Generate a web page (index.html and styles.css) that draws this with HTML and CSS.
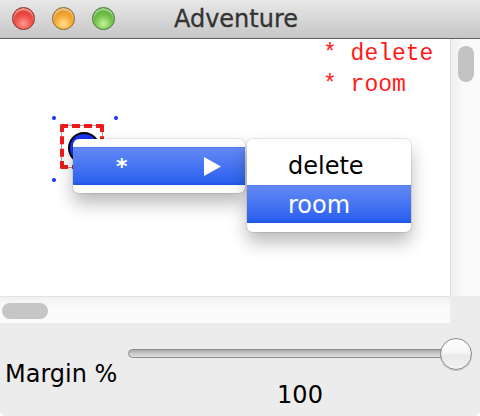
FILE: index.html
```html
<!DOCTYPE html>
<html>
<head>
<meta charset="utf-8">
<link rel="stylesheet" href="styles.css">
</head>
<body>
<div class="window">
  <div class="titlebar">
    <div class="lights">
      <span class="light red"></span>
      <span class="light orange"></span>
      <span class="light green"></span>
    </div>
    <div class="title">Adventure</div>
  </div>
  <div class="content">
    <div class="canvas">
      <div class="log">
        <div>* delete</div>
        <div>* room</div>
      </div>
      <span class="handle h1"></span>
      <span class="handle h2"></span>
      <span class="handle h3"></span>
      <span class="handle h4"></span>
      <div class="sel-gray"></div>
      <div class="sel-red"></div>
      <div class="node"></div>
    </div>
    <div class="vscroll"><div class="vthumb"></div></div>
    <div class="hscroll"><div class="hthumb"></div></div>
    <div class="corner"></div>
  </div>
  <div class="panel">
    <div class="label">Margin %</div>
    <div class="slider-col">
      <div class="slider">
        <div class="track"></div>
        <div class="knob"></div>
      </div>
      <div class="value">100</div>
    </div>
  </div>

  <div class="menu menu1">
    <div class="item hl">
      <span class="star">*</span>
      <svg class="arrow" width="17" height="19" viewBox="0 0 17 19"><polygon points="0,0 17,9.5 0,19" fill="#fff"/></svg>
    </div>
  </div>
  <div class="menu menu2">
    <div class="item">delete</div>
    <div class="item hl">room</div>
  </div>
</div>
</body>
</html>
```

FILE: styles.css
```css
html, body {
  margin: 0;
  padding: 0;
  background: #ffffff;
}

.window {
  position: relative;
  width: 480px;
  height: 416px;
  overflow: hidden;
  border-radius: 0 0 6px 6px;
  background: #ececec;
  font-family: "DejaVu Sans", sans-serif;
}

.titlebar {
  position: relative;
  height: 38px;
  border-bottom: 1px solid #5e5e5e;
  background: linear-gradient(#e8e8e8, #d3d3d3 60%, #c6c6c6);
  display: flex;
  align-items: center;
}

.lights {
  display: flex;
  gap: 17px;
  padding-left: 12px;
  margin-top: -2px;
}

.light {
  width: 23px;
  height: 23px;
  border-radius: 50%;
  box-sizing: border-box;
}

.red {
  background: radial-gradient(circle at 50% 75%, #ff9a8e 0%, #ee4d45 45%, #c8231c 100%);
  border: 1px solid #8e2a26;
  box-shadow: inset 0 2px 2px rgba(255,255,255,0.6);
}

.orange {
  background: radial-gradient(circle at 50% 75%, #ffe08a 0%, #f3a935 45%, #cc7a10 100%);
  border: 1px solid #8e6523;
  box-shadow: inset 0 2px 2px rgba(255,255,255,0.6);
}

.green {
  background: radial-gradient(circle at 50% 75%, #c4f59a 0%, #71c34a 45%, #3d9224 100%);
  border: 1px solid #3f7a2c;
  box-shadow: inset 0 2px 2px rgba(255,255,255,0.6);
}

.title {
  position: absolute;
  left: 0;
  right: 8px;
  top: 0;
  text-align: center;
  line-height: 38px;
  font-size: 24px;
  color: #333333;
  -webkit-text-stroke: 0.3px #333333;
}

.content {
  display: grid;
  grid-template-columns: 450px 30px;
  grid-template-rows: 257px 27px;
}

.canvas {
  position: relative;
  background: #ffffff;
}

.log {
  position: absolute;
  left: 323px;
  top: 0;
  font-family: "Liberation Mono", monospace;
  font-size: 23px;
  line-height: 31px;
  color: #ff1a1a;
  white-space: nowrap;
}

.handle {
  position: absolute;
  width: 4px;
  height: 4px;
  border-radius: 50%;
  background: #1530ff;
}
.h1 { left: 52px; top: 77px; }
.h2 { left: 114px; top: 77px; }
.h3 { left: 52px; top: 139px; }
.h4 { left: 114px; top: 139px; }

.sel-gray {
  position: absolute;
  left: 61px;
  top: 86px;
  width: 40px;
  height: 41px;
  border: 1px solid #a0a0a0;
}

.sel-red {
  position: absolute;
  left: 60px;
  top: 85px;
  width: 36px;
  height: 37px;
  border: 4px dashed #f01a1a;
  border-radius: 2px;
}

.node {
  position: absolute;
  left: 68px;
  top: 93px;
  width: 28px;
  height: 28px;
  border-radius: 50%;
  background: #1834f4;
  border: 2px solid #000;
}

.vscroll {
  position: relative;
  border-left: 1px solid #dedede;
  background: linear-gradient(90deg, #efefef, #f9f9f9 40%, #fbfbfb);
}

.vthumb {
  position: absolute;
  left: 7px;
  top: 7px;
  width: 16px;
  height: 36px;
  border-radius: 8px;
  background: #c3c3c3;
}

.hscroll {
  position: relative;
  border-top: 1px solid #e2e2e2;
  background: linear-gradient(#f1f1f1, #fafafa 40%, #fbfbfb);
}

.hthumb {
  position: absolute;
  left: 2px;
  top: 6px;
  width: 46px;
  height: 16px;
  border-radius: 8px;
  background: #c6c6c6;
}

.corner {
  background: #ececec;
}

.panel {
  display: flex;
  align-items: flex-start;
  padding-left: 5px;
  height: 93px;
}

.label {
  margin-top: 37px;
  width: 112px;
  margin-right: 11px;
  font-size: 24px;
  line-height: 28px;
  color: #000;
  white-space: nowrap;
}

.slider-col {
  width: 344px;
  margin-top: 15px;
  display: flex;
  flex-direction: column;
  align-items: center;
}

.slider {
  position: relative;
  width: 344px;
  height: 33px;
}

.track {
  position: absolute;
  left: 0;
  right: 14px;
  top: 11px;
  height: 9px;
  box-sizing: border-box;
  border: 1px solid #8c8c8c;
  border-radius: 5px;
  background: linear-gradient(#a9a9a9, #cfcfcf 60%, #dedede);
}

.knob {
  position: absolute;
  right: 0;
  top: 0;
  width: 32px;
  height: 32px;
  box-sizing: border-box;
  border-radius: 50%;
  border: 1px solid #8a8a8a;
  background: linear-gradient(#ffffff, #f6f6f6 45%, #e9e9e9 55%, #f2f2f2);
  box-shadow: 0 1px 1px rgba(0,0,0,0.15);
}

.value {
  margin-top: 10px;
  font-size: 24px;
  line-height: 28px;
  color: #000;
}

.menu {
  position: absolute;
  background: #ffffff;
  border-radius: 6px;
  box-shadow: 0 0 0 1px rgba(0,0,0,0.08), 0 10px 18px rgba(0,0,0,0.28);
  padding-top: 8px;
  box-sizing: border-box;
}

.menu1 {
  left: 73px;
  top: 139px;
  width: 172px;
  height: 54px;
}

.menu2 {
  left: 247px;
  top: 139px;
  width: 164px;
  height: 93px;
}

.item {
  height: 38px;
  line-height: 38px;
  font-size: 24px;
  color: #000;
  padding-left: 41px;
  box-sizing: border-box;
}

.item.hl {
  color: #fff;
  background: linear-gradient(#6288f4, #4674f2 50%, #2d62ef 90%, #1d55e6);
  border-top: 1px solid #557ef2;
}

.menu1 .item {
  display: flex;
  align-items: center;
  justify-content: space-between;
  padding-left: 43px;
  padding-right: 24px;
}

.star {
  font-weight: bold;
  font-size: 22px;
}

.arrow {
  display: block;
}
```
